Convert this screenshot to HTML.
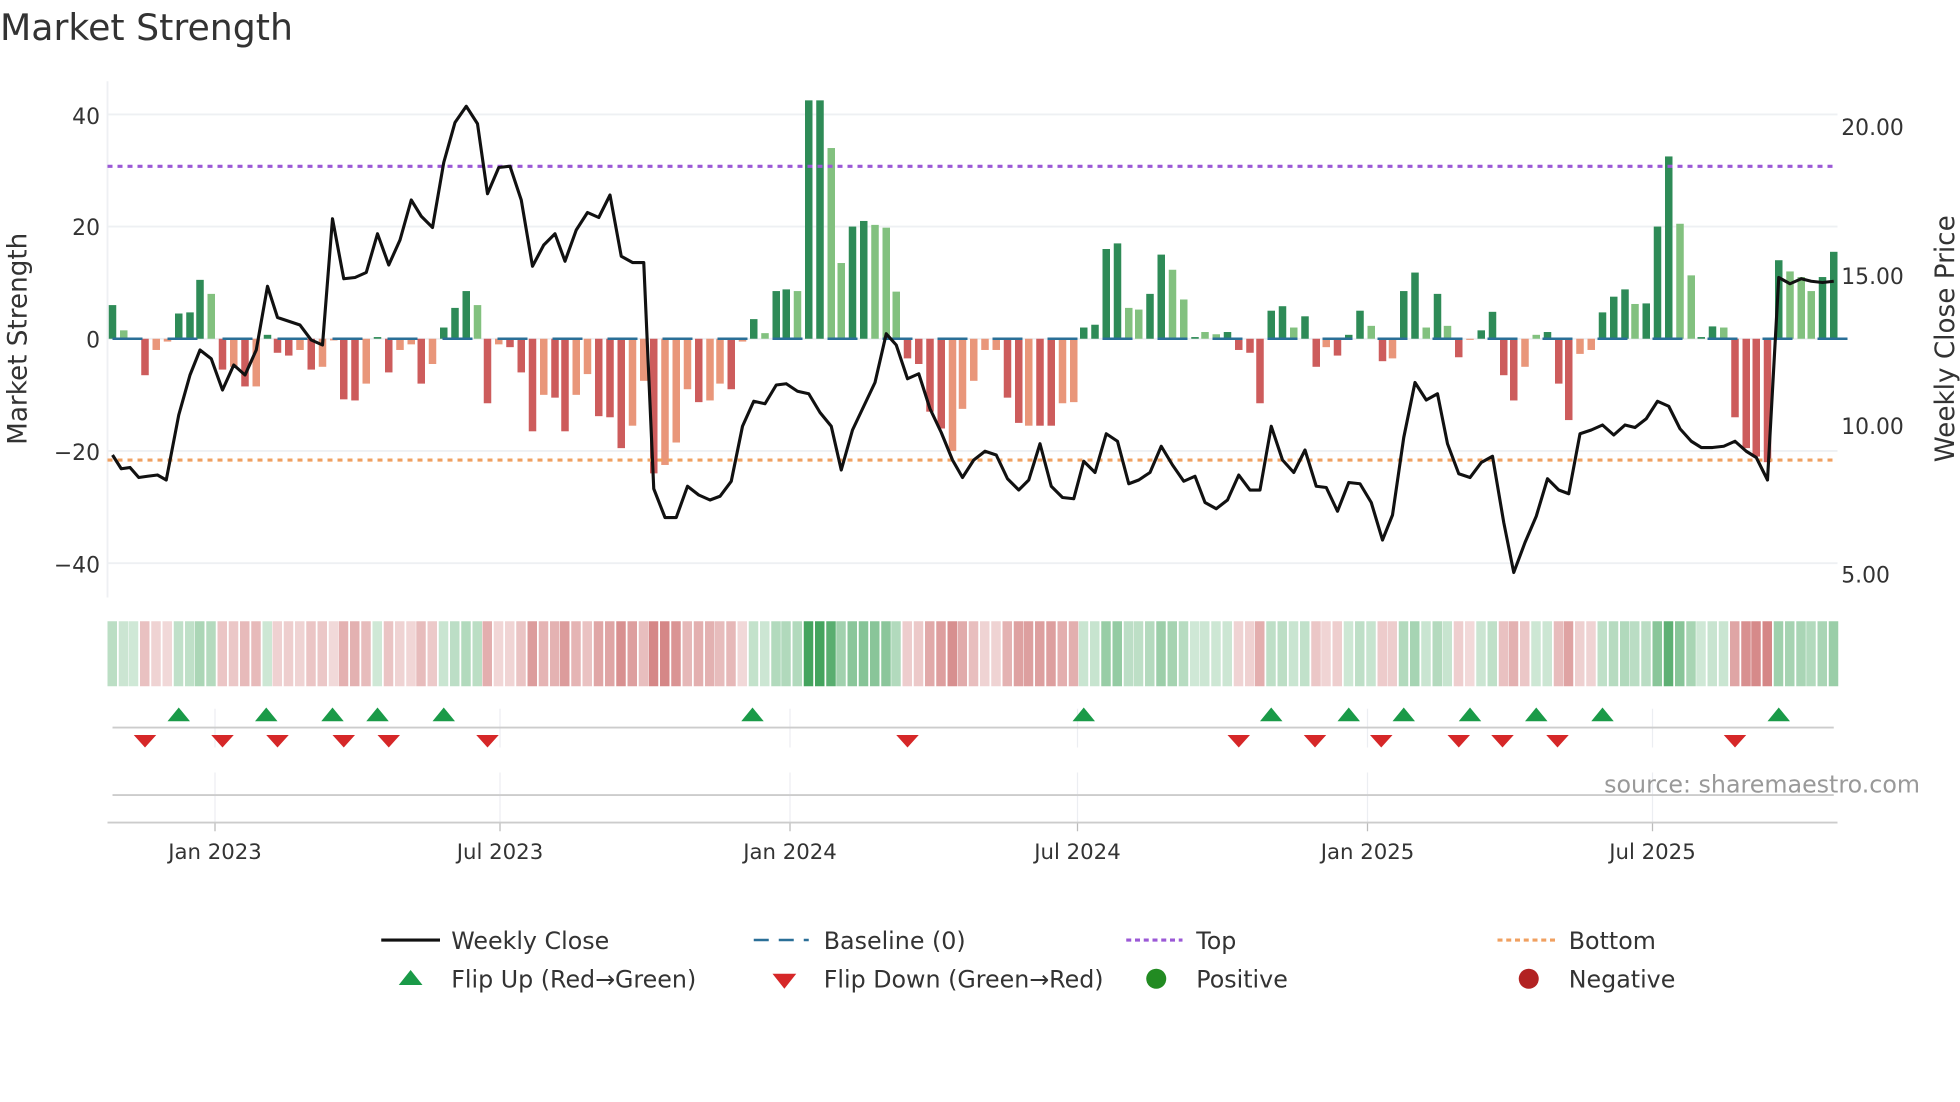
<!DOCTYPE html>
<html><head><meta charset="utf-8"><style>
html,body{margin:0;padding:0;background:#fff;width:1960px;height:1102px;overflow:hidden}
svg{display:block}
text{font-family:"DejaVu Sans","Liberation Sans",sans-serif}
</style></head><body>
<svg id="s" width="1960" height="1102" viewBox="0 0 1568 881.6" xmlns="http://www.w3.org/2000/svg">
<text x="0" y="32" font-size="29" fill="#333">Market Strength</text>
<g id="grid"></g>
<g id="bars"></g>
<g id="strip"></g>
<g id="marks"></g>
<g id="lines"></g>
<text x="1536" y="634" font-size="19" fill="#999" text-anchor="end">source: sharemaestro.com</text>
<text transform="translate(21,271) rotate(-90)" font-size="21" fill="#333" text-anchor="middle">Market Strength</text>
<text transform="translate(1563,271) rotate(-90)" font-size="21" fill="#333" text-anchor="middle">Weekly Close Price</text>
<g font-size="17.5" fill="#333" text-anchor="end">
<text x="80" y="99">40</text><text x="80" y="188">20</text><text x="80" y="278">0</text><text x="80" y="368">−20</text><text x="80" y="458">−40</text>
</g>
<g font-size="17.5" fill="#333">
<text x="1473" y="108">20.00</text><text x="1473" y="227">15.00</text><text x="1473" y="347">10.00</text><text x="1473" y="466">5.00</text>
</g>
<g font-size="17" fill="#333" text-anchor="middle">
<text x="172" y="687">Jan 2023</text><text x="400" y="687">Jul 2023</text><text x="632" y="687">Jan 2024</text><text x="862" y="687">Jul 2024</text><text x="1094" y="687">Jan 2025</text><text x="1322" y="687">Jul 2025</text>
</g>
<g font-size="19" fill="#333">
<line x1="305" y1="752" x2="352" y2="752" stroke="#111" stroke-width="2.5"/><text x="361" y="759">Weekly Close</text>
<line x1="603" y1="752" x2="647" y2="752" stroke="#2a6f97" stroke-width="2" stroke-dasharray="12,8"/><text x="659" y="759">Baseline (0)</text>
<line x1="901" y1="752" x2="946" y2="752" stroke="#9b59d6" stroke-width="2.5" stroke-dasharray="4,3"/><text x="957" y="759">Top</text>
<line x1="1198" y1="752" x2="1244" y2="752" stroke="#f0a060" stroke-width="2.5" stroke-dasharray="4,3"/><text x="1255" y="759">Bottom</text>
<polygon points="319,788 338,788 328.5,776" fill="#1a9a48"/><text x="361" y="790">Flip Up (Red→Green)</text>
<polygon points="618,779 637,779 627.5,791" fill="#d62728"/><text x="659" y="790">Flip Down (Green→Red)</text>
<circle cx="925" cy="783" r="8" fill="#228b22"/><text x="957" y="790">Positive</text>
<circle cx="1223" cy="783" r="8" fill="#b22222"/><text x="1255" y="790">Negative</text>
</g>
</svg>
<script>
var NS="http://www.w3.org/2000/svg";
function el(p,t,a){var e=document.createElementNS(NS,t);for(var k in a)e.setAttribute(k,a[k]);document.getElementById(p).appendChild(e);return e;}
var B=[[90,6,'d'],[99,1.5,'l'],[107,0.2,'l'],[116,-6.5,'r'],[125,-2,'s'],[134,-0.5,'s'],[143,4.5,'d'],[152,4.7,'d'],[160,10.5,'d'],[169,8,'l'],[178,-5.5,'r'],[187,-5,'s'],[196,-8.5,'r'],[205,-8.5,'s'],[214,0.7,'d'],[222,-2.5,'r'],[231,-3,'r'],[240,-2,'s'],[249,-5.5,'r'],[258,-5,'s'],[267,-0.3,'s'],[275,-10.8,'r'],[284,-11,'r'],[293,-8,'s'],[302,0.3,'d'],[311,-6,'r'],[320,-2,'s'],[329,-1,'s'],[337,-8,'r'],[346,-4.5,'s'],[355,2,'d'],[364,5.5,'d'],[373,8.5,'d'],[382,6,'l'],[390,-11.5,'r'],[399,-1,'s'],[408,-1.5,'r'],[417,-6,'r'],[426,-16.5,'r'],[435,-10,'s'],[444,-10.5,'r'],[452,-16.5,'r'],[461,-10,'s'],[470,-6.3,'s'],[479,-13.8,'r'],[488,-14,'r'],[497,-19.5,'r'],[506,-15.5,'s'],[515,-7.5,'s'],[523,-24,'r'],[532,-22.5,'s'],[541,-18.5,'s'],[550,-9,'s'],[559,-11.3,'r'],[568,-11,'s'],[576,-8,'s'],[585,-9,'r'],[594,-0.5,'s'],[603,3.5,'d'],[612,1,'l'],[621,8.5,'d'],[629,8.8,'d'],[638,8.5,'l'],[647,42.5,'d'],[656,42.5,'d'],[665,34,'l'],[673,13.5,'l'],[682,20,'d'],[691,21,'d'],[700,20.3,'l'],[709,19.8,'l'],[717,8.4,'l'],[726,-3.5,'r'],[735,-4.5,'r'],[744,-13,'r'],[753,-16,'r'],[762,-20,'s'],[770,-12.5,'s'],[779,-7.5,'s'],[788,-2,'s'],[797,-2,'s'],[806,-10.5,'r'],[815,-15,'r'],[823,-15.5,'s'],[832,-15.5,'r'],[841,-15.5,'r'],[850,-11.5,'s'],[859,-11.3,'s'],[867,2,'d'],[876,2.5,'d'],[885,16,'d'],[894,17,'d'],[903,5.5,'l'],[911,5.2,'l'],[920,8,'d'],[929,15,'d'],[938,12.3,'l'],[947,7,'l'],[956,0.3,'d'],[964,1.2,'l'],[973,0.8,'l'],[982,1.2,'d'],[991,-2,'r'],[1000,-2.5,'r'],[1008,-11.5,'r'],[1017,5,'d'],[1026,5.8,'d'],[1035,2,'l'],[1044,4,'d'],[1053,-5,'r'],[1061,-1.5,'s'],[1070,-3,'r'],[1079,0.7,'d'],[1088,5,'d'],[1097,2.3,'l'],[1106,-4,'r'],[1114,-3.5,'s'],[1123,8.5,'d'],[1132,11.8,'d'],[1141,2,'l'],[1150,8,'d'],[1158,2.3,'l'],[1167,-3.3,'r'],[1176,-0.2,'s'],[1185,1.5,'d'],[1194,4.8,'d'],[1203,-6.5,'r'],[1211,-11,'r'],[1220,-5,'s'],[1229,0.7,'l'],[1238,1.2,'d'],[1247,-8,'r'],[1255,-14.5,'r'],[1264,-2.7,'s'],[1273,-2,'s'],[1282,4.7,'d'],[1291,7.5,'d'],[1300,8.8,'d'],[1308,6.2,'l'],[1317,6.3,'d'],[1326,20,'d'],[1335,32.5,'d'],[1344,20.5,'l'],[1353,11.3,'l'],[1361,0.3,'d'],[1370,2.2,'d'],[1379,2,'l'],[1388,-14,'r'],[1397,-19.5,'r'],[1405,-21,'r'],[1414,-22,'r'],[1423,14,'d'],[1432,12,'l'],[1441,11,'l'],[1449,8.5,'l'],[1458,11,'d'],[1467,15.5,'d']];
var C={d:'#2e8b57',l:'#82c17f',r:'#cd5c5c',s:'#e9967a'};
function vy(v){return 271-v*4.4875;}
[40,20,0,-20,-40].forEach(function(v){el('grid','line',{x1:86,x2:1470,y1:vy(v),y2:vy(v),stroke:'#eef0f3','stroke-width':1.5});});
el('grid','line',{x1:86,x2:86,y1:65,y2:478,stroke:'#eef0f3','stroke-width':1.5});
[172,400,632,862,1094,1322].forEach(function(x){el('grid','line',{x1:x,x2:x,y1:567,y2:598,stroke:'#eceef2','stroke-width':1});el('grid','line',{x1:x,x2:x,y1:618,y2:658,stroke:'#eceef2','stroke-width':1});el('grid','line',{x1:x,x2:x,y1:658,y2:665,stroke:'#bbb','stroke-width':1});});
el('grid','line',{x1:90,x2:1467,y1:582,y2:582,stroke:'#ccc','stroke-width':1.5});
el('grid','line',{x1:90,x2:1467,y1:636,y2:636,stroke:'#ccc','stroke-width':1.5});
el('grid','line',{x1:86,x2:1470,y1:658,y2:658,stroke:'#ccc','stroke-width':1.5});
B.forEach(function(b){var y=vy(b[1]);el('bars','rect',{x:b[0]-3,y:Math.min(y,271),width:6,height:Math.max(Math.abs(y-271),0.6),fill:C[b[2]]});
 var v=b[1],col;
 if(v>=0){col='rgba(40,150,70,'+(0.22+0.65*Math.min(1,v/40))+')';}
 else{col='rgba(190,70,70,'+(0.2+0.45*Math.min(1,-v/22))+')';}
 el('strip','rect',{x:b[0]-4,y:497,width:7.6,height:52,fill:col});
});
for(var x=90;x<1467;x+=44){el('bars','line',{x1:x,x2:x+24,y1:271,y2:271,stroke:'#2a6f97','stroke-width':2});}
el('lines','line',{x1:86,x2:1470,y1:133,y2:133,stroke:'#9b59d6','stroke-width':2.5,'stroke-dasharray':'4,4'});
el('lines','line',{x1:86,x2:1470,y1:368,y2:368,stroke:'#f0a060','stroke-width':2.5,'stroke-dasharray':'4,4'});
var P="90,364 97,375 104,374 111,382 118,381 126,380 133,384 143,332 152,300 160,280 169,287 178,312 187,292 196,300 205,280 214,229 222,254 231,257 240,260 249,272 258,276 266,175 275,223 284,222 293,218 302,187 311,212 320,192 329,160 337,173 346,182 355,130 364,98 373,85 382,99 390,155 399,134 408,133 417,160 426,213 435,196 444,187 452,209 461,184 470,170 479,174 488,156 497,205 506,210 515,210 523,391 532,414 541,414 550,389 559,396 568,400 576,397 585,385 594,341 603,321 612,323 621,308 629,307 638,313 647,315 656,330 665,341 673,376 682,344 691,325 700,306 709,267 717,276 726,303 735,299 744,327 753,346 762,368 770,382 779,368 788,361 797,364 806,383 815,392 823,384 832,355 841,389 850,398 859,399 867,369 876,378 885,347 894,353 903,387 911,384 920,378 929,357 938,372 947,385 956,381 964,402 973,407 982,400 991,380 1000,392 1008,392 1017,341 1026,368 1035,378 1044,360 1053,389 1061,390 1070,409 1079,386 1088,387 1097,402 1106,432 1114,412 1123,350 1132,306 1141,320 1150,315 1158,355 1167,379 1176,382 1185,370 1194,365 1203,418 1211,458 1220,434 1229,413 1238,383 1247,392 1255,395 1264,347 1273,344 1282,340 1291,348 1300,340 1308,342 1317,335 1326,321 1335,325 1344,343 1353,353 1361,358 1370,358 1379,357 1388,353 1397,361 1405,366 1414,384 1423,222 1432,227 1441,223 1449,225 1458,226 1467,225";
el('lines','polyline',{points:P,fill:'none',stroke:'#111','stroke-width':2.5,'stroke-linejoin':'round'});
[143,213,266,302,355,602,867,1017,1079,1123,1176,1229,1282,1423].forEach(function(x){el('marks','polygon',{points:(x-9)+',577 '+(x+9)+',577 '+x+',566',fill:'#1a9a48'});});
[116,178,222,275,311,390,726,991,1052,1105,1167,1202,1246,1388].forEach(function(x){el('marks','polygon',{points:(x-9)+',588 '+(x+9)+',588 '+x+',598',fill:'#d62728'});});
</script>
</body></html>
